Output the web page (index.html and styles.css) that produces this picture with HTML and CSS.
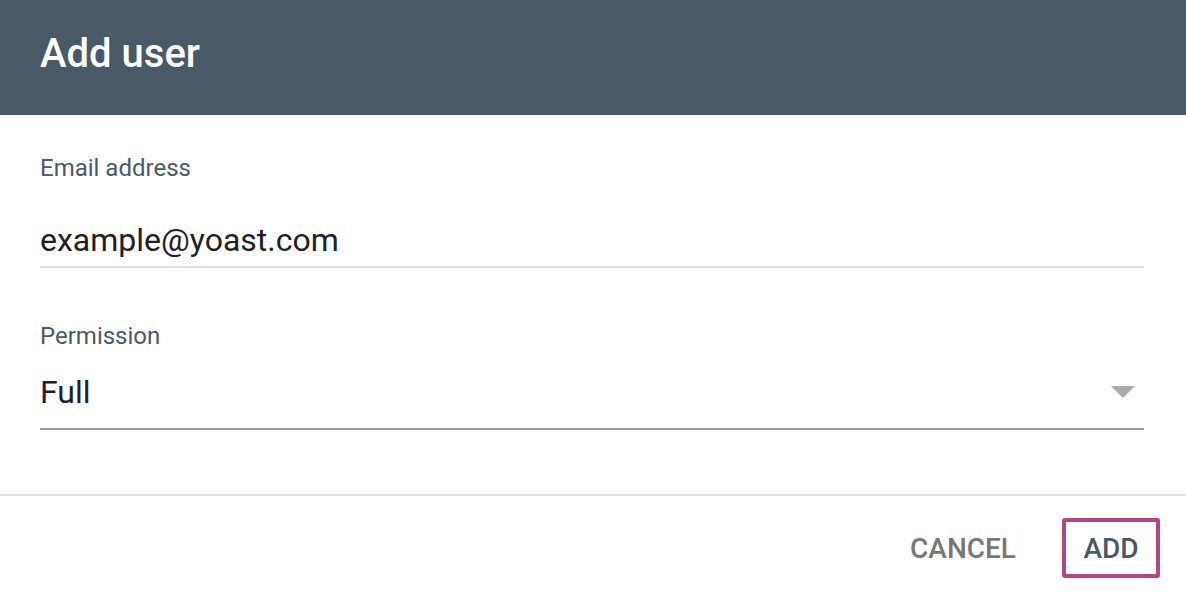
FILE: index.html
```html
<!DOCTYPE html>
<html lang="en">
<head>
    <meta charset="UTF-8">
    <meta name="viewport" content="width=device-width, initial-scale=1.0">
    <title>Add user</title>
    <link rel="stylesheet" href="styles.css">
</head>
<body>
    <div class="dialog">
        <header class="dialog-header">
            <h1>Add user</h1>
        </header>

        <div class="dialog-body">
            <div class="field">
                <label class="field-label" for="email">Email address</label>
                <div class="field-input">
                    <input id="email" type="text" value="example@yoast.com">
                </div>
            </div>

            <div class="field field-select">
                <span class="field-label">Permission</span>
                <div class="field-input select">
                    <span class="select-value">Full</span>
                    <span class="select-arrow"></span>
                </div>
            </div>
        </div>

        <footer class="dialog-actions">
            <button class="btn btn-cancel">CANCEL</button>
            <button class="btn btn-add">ADD</button>
        </footer>
    </div>
</body>
</html>
```

FILE: styles.css
```css
body {
    margin: 0;
    font-family: Roboto, "Liberation Sans", Arial, sans-serif;
    background-color: #ffffff;
    color: #212121;
}

.dialog-header {
    height: 115px;
    background-color: #475a66;
    display: flex;
    align-items: center;
    padding: 0 40px;
}

.dialog-header h1 {
    margin: 0 0 9px;
    font-size: 40px;
    font-weight: 500;
    color: #ffffff;
}

.dialog-body {
    padding: 39px 42px 0 40px;
    height: 340px;
    border-bottom: 2px solid #e0e0e0;
}

.field-label {
    display: block;
    font-size: 24px;
    color: #4a5a66;
    line-height: 28px;
}

.field-input {
    border-bottom: 2px solid #dddddd;
    margin-top: 40px;
    height: 44px;
}

.field-input input {
    border: none;
    outline: none;
    padding: 0;
    width: 100%;
    font-family: inherit;
    font-size: 32px;
    color: #212121;
    height: 36px;
    line-height: 36px;
    background: transparent;
}

.field-select {
    margin-top: 54px;
}

.select {
    margin-top: 24px;
    height: 54px;
    border-bottom-color: #999999;
    display: flex;
    align-items: flex-start;
    justify-content: space-between;
}

.select-value {
    font-size: 32px;
    line-height: 36px;
}

.select-arrow {
    width: 0;
    height: 0;
    margin: 12px 9px 0 0;
    border-left: 12px solid transparent;
    border-right: 12px solid transparent;
    border-top: 12px solid #aaaaaa;
}

.dialog-actions {
    display: flex;
    justify-content: flex-end;
    align-items: center;
    gap: 46px;
    padding: 22px 26px 0 0;
}

.btn {
    font-family: inherit;
    font-size: 28px;
    font-weight: 500;
    background: none;
    border: none;
    cursor: pointer;
    padding: 0;
}

.btn-cancel {
    color: #777777;
}

.btn-add {
    color: #475a66;
    width: 98px;
    height: 60px;
    border: 4px solid #b5467f;
    border-radius: 3px;
}
```
